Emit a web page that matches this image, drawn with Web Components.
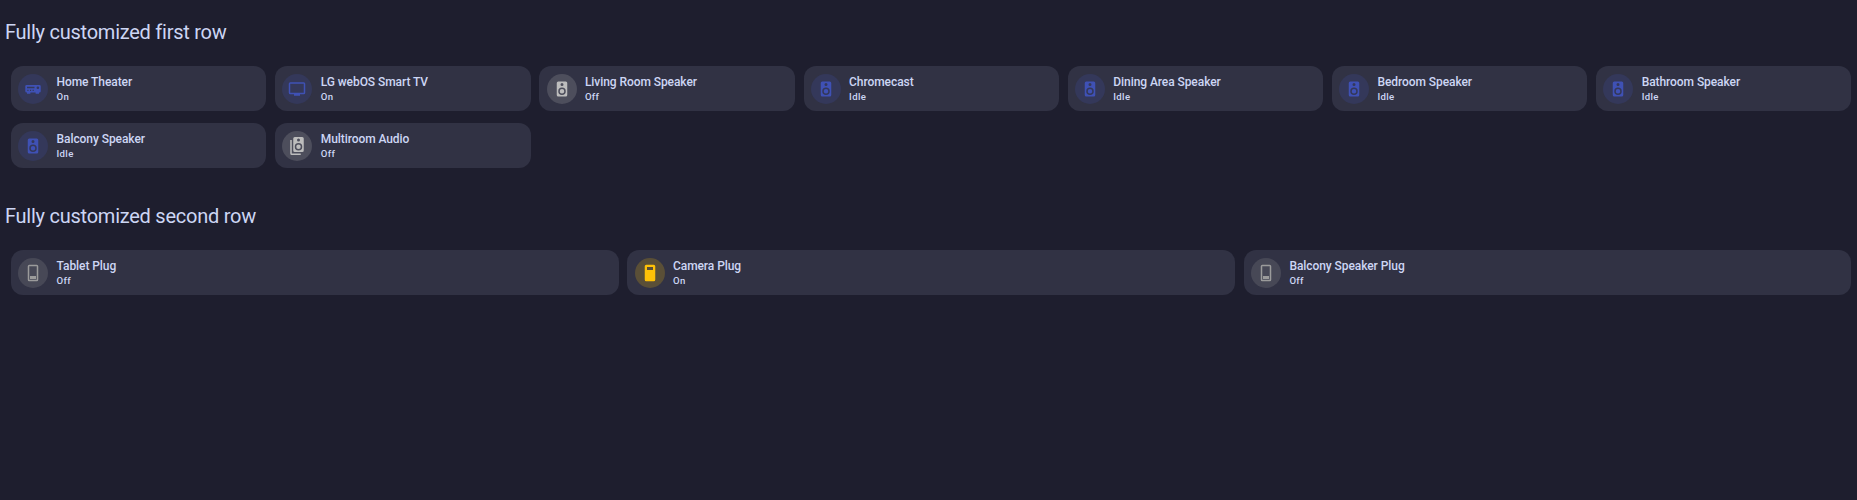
<!DOCTYPE html>
<html lang="en"><head><meta charset="utf-8"><title>Dashboard</title>
<style>html,body{margin:0;background:#1e1e2e}body{height:500px;overflow:hidden;font-family:Roboto,sans-serif;color:#cdd6f4}</style></head>
<body>
<dashboard-view>
<card-row heading="Fully customized first row" style="--columns:7">
<entity-card name="Home Theater" state="On" icon="receiver" tone="blue"></entity-card>
<entity-card name="LG webOS Smart TV" state="On" icon="tv" tone="blue"></entity-card>
<entity-card name="Living Room Speaker" state="Off" icon="speaker" tone="off"></entity-card>
<entity-card name="Chromecast" state="Idle" icon="speaker" tone="blue"></entity-card>
<entity-card name="Dining Area Speaker" state="Idle" icon="speaker" tone="blue"></entity-card>
<entity-card name="Bedroom Speaker" state="Idle" icon="speaker" tone="blue"></entity-card>
<entity-card name="Bathroom Speaker" state="Idle" icon="speaker" tone="blue"></entity-card>
<entity-card name="Balcony Speaker" state="Idle" icon="speaker" tone="blue"></entity-card>
<entity-card name="Multiroom Audio" state="Off" icon="speakers" tone="off"></entity-card>
</card-row>
<card-row heading="Fully customized second row" style="--columns:3">
<entity-card name="Tablet Plug" state="Off" icon="switchOff" tone="grey"></entity-card>
<entity-card name="Camera Plug" state="On" icon="switchOn" tone="amber"></entity-card>
<entity-card name="Balcony Speaker Plug" state="Off" icon="switchOff" tone="grey"></entity-card>
</card-row>
</dashboard-view>
<script>
const ICONS={
speaker:'M12,12A3,3 0 0,0 9,15A3,3 0 0,0 12,18A3,3 0 0,0 15,15A3,3 0 0,0 12,12M12,20A5,5 0 0,1 7,15A5,5 0 0,1 12,10A5,5 0 0,1 17,15A5,5 0 0,1 12,20M12,4A2,2 0 0,1 14,6A2,2 0 0,1 12,8A2,2 0 0,1 10,6A2,2 0 0,1 12,4M17,2H7A2,2 0 0,0 5,4V20A2,2 0 0,0 7,22H17A2,2 0 0,0 19,20V4A2,2 0 0,0 17,2Z',
speakers:'M14,10A3,3 0 0,0 11,13A3,3 0 0,0 14,16A3,3 0 0,0 17,13A3,3 0 0,0 14,10M14,18A5,5 0 0,1 9,13A5,5 0 0,1 14,8A5,5 0 0,1 19,13A5,5 0 0,1 14,18M14,2A2,2 0 0,1 16,4A2,2 0 0,1 14,6A2,2 0 0,1 12,4A2,2 0 0,1 14,2M19,0H9A2,2 0 0,0 7,2V18A2,2 0 0,0 9,20H19A2,2 0 0,0 21,18V2A2,2 0 0,0 19,0M5,22H17V24H5A2,2 0 0,1 3,22V4H5Z',
tv:'M21,17H3V5H21M21,3H3A2,2 0 0,0 1,5V17A2,2 0 0,0 3,19H8V21H16V19H21A2,2 0 0,0 23,17V5A2,2 0 0,0 21,3Z',
receiver:'M3.5,6.5H20.5A1.8,1.8 0 0,1 22.3,8.3V15A1.8,1.8 0 0,1 20.5,16.8H20V18.3H15.5V16.8H8.5V18.3H4V16.8H3.5A1.8,1.8 0 0,1 1.7,15V8.3A1.8,1.8 0 0,1 3.5,6.5M4,9V11H14V9ZM18.5,8.5A1.7,1.7 0 1,0 18.5,12A1.7,1.7 0 1,0 18.5,8.5M4.5,13V14.5H6V13ZM8,13V14.5H9.5V13ZM11.5,13V14.5H13V13Z',
switchOff:'M7,1H17A2,2 0 0,1 19,3V21A2,2 0 0,1 17,23H7A2,2 0 0,1 5,21V3A2,2 0 0,1 7,1M7,3V21H17V3ZM8,16H16V20H8Z',
switchOn:'M7,1H17A2,2 0 0,1 19,3V21A2,2 0 0,1 17,23H7A2,2 0 0,1 5,21V3A2,2 0 0,1 7,1M8,4V8H16V4Z'};
class DashboardView extends HTMLElement{constructor(){super();this.attachShadow({mode:'open'}).innerHTML=`<style>:host{display:flex;flex-direction:column;gap:34px;padding:18px 5.55px 0 5px}</style><slot></slot>`}}
class CardRow extends HTMLElement{connectedCallback(){if(this.shadowRoot)return;this.attachShadow({mode:'open'}).innerHTML=`<style>:host{display:block}h2{margin:0;font:400 20px/28px Roboto,sans-serif;letter-spacing:-.25px}.grid{display:grid;grid-template-columns:repeat(var(--columns),minmax(0,1fr));gap:12px 8.9px;margin:20px 0 0 6.03px}</style><h2>${this.getAttribute('heading')}</h2><div class="grid"><slot></slot></div>`}}
class EntityCard extends HTMLElement{connectedCallback(){if(this.shadowRoot)return;const a=n=>this.getAttribute(n);this.attachShadow({mode:'open'}).innerHTML=`<style>
:host{display:flex;align-items:center;gap:8.25px;box-sizing:border-box;height:45px;padding:1px 7.28px 0;border-radius:12px;background:#313244;--fg:#3f51b5;--bg:rgba(63,81,181,.2)}
:host([tone=off]){--fg:#bdbdbd;--bg:rgba(189,189,189,.2)}
:host([tone=grey]){--fg:#9b9b9b;--bg:rgba(158,158,158,.2)}
:host([tone=amber]){--fg:#ffc107;--bg:rgba(255,193,7,.2)}
.icon{display:grid;place-items:center;flex:none;width:30px;height:30px;border-radius:50%;background:var(--bg)}
svg{display:block;width:18px;height:18px;fill:var(--fg);fill-rule:evenodd}
.info{display:flex;flex-direction:column;white-space:nowrap;margin-bottom:2px}
.name{font:500 12px/16px Roboto,sans-serif;letter-spacing:-.07px}
.state{font:500 9.6px/13px Roboto,sans-serif;letter-spacing:.35px}
</style><div class="icon"><svg viewBox="0 0 24 24"><path d="${ICONS[a('icon')]}"/></svg></div><div class="info"><span class="name">${a('name')}</span><span class="state">${a('state')}</span></div>`}}
customElements.define('dashboard-view',DashboardView);customElements.define('card-row',CardRow);customElements.define('entity-card',EntityCard);
</script></body></html>
